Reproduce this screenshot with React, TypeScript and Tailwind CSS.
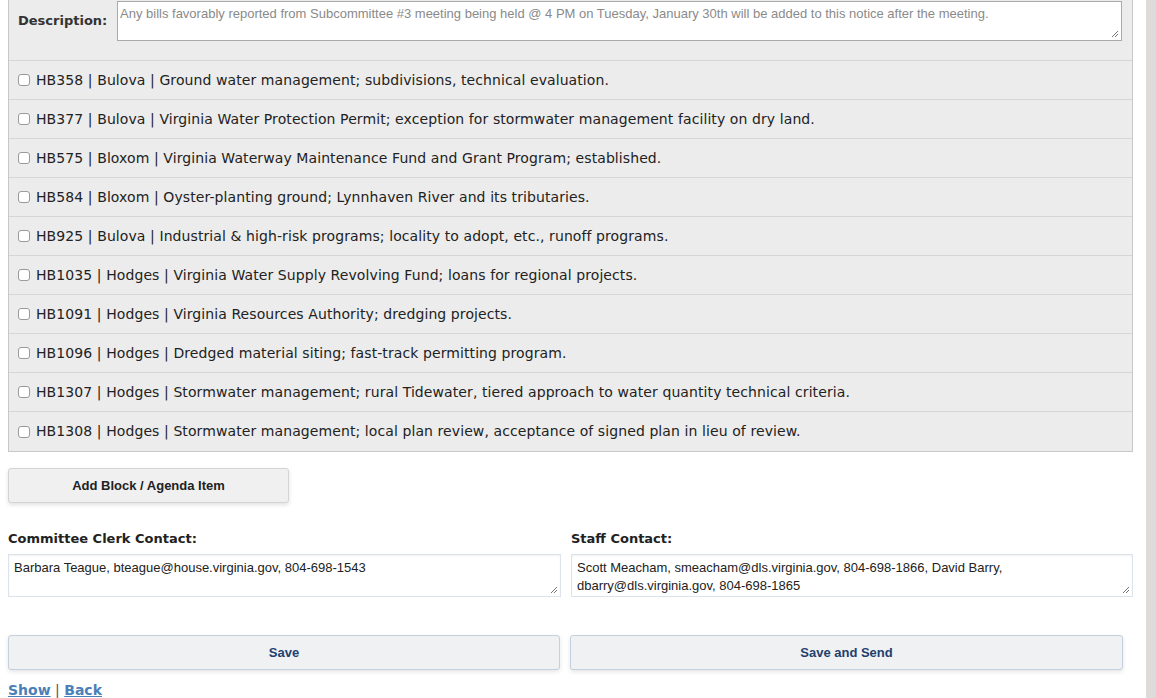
import React from "react";

const bills = [
  "HB358 | Bulova | Ground water management; subdivisions, technical evaluation.",
  "HB377 | Bulova | Virginia Water Protection Permit; exception for stormwater management facility on dry land.",
  "HB575 | Bloxom | Virginia Waterway Maintenance Fund and Grant Program; established.",
  "HB584 | Bloxom | Oyster-planting ground; Lynnhaven River and its tributaries.",
  "HB925 | Bulova | Industrial & high-risk programs; locality to adopt, etc., runoff programs.",
  "HB1035 | Hodges | Virginia Water Supply Revolving Fund; loans for regional projects.",
  "HB1091 | Hodges | Virginia Resources Authority; dredging projects.",
  "HB1096 | Hodges | Dredged material siting; fast-track permitting program.",
  "HB1307 | Hodges | Stormwater management; rural Tidewater, tiered approach to water quantity technical criteria.",
  "HB1308 | Hodges | Stormwater management; local plan review, acceptance of signed plan in lieu of review.",
];

const verdana = "font-['DejaVu_Sans',Verdana,sans-serif]";
const helv = "font-['Liberation_Sans',Arial,sans-serif]";

function Grip() {
  return (
    <svg className="absolute right-[2px] bottom-[2px]" width="8" height="8" viewBox="0 0 8 8">
      <path d="M7 1 L1 7 M7 4 L4 7" stroke="#777" strokeWidth="1" />
    </svg>
  );
}

export default function App() {
  return (
    <div className="flex h-[698px] w-[1156px] overflow-hidden bg-white text-[#222]">
      <div className="flex-1 pl-2 pr-[13px]">
        {/* bills panel */}
        <div className="-mt-[19px] border border-[#c8c8c8] bg-[#ececec]">
          <div className="flex items-center border-b border-[#d6d6d6] pt-[19px] pb-[19px] pl-[9px] pr-[10px]">
            <span className={`${verdana} w-[99px] text-[13px] font-bold text-[#333]`}>Description:</span>
            <div className={`${helv} relative h-[40px] flex-1 border border-[#aaa] bg-white px-[2px] pt-[4px] text-[13px] leading-[15px] text-[#8a8a8a]`}>
              Any bills favorably reported from Subcommittee #3 meeting being held @ 4 PM on Tuesday, January 30th will be added to this notice after the meeting.
              <Grip />
            </div>
          </div>
          {bills.map((b, i) => (
            <label
              key={b}
              className={`flex h-[39px] items-center gap-[6px] pl-[9px] ${i < bills.length - 1 ? "border-b border-[#d6d6d6]" : ""}`}
            >
              <input type="checkbox" className="h-[12px] w-[12px] shrink-0 appearance-none rounded-[3px] border border-[#9a9a9a] bg-white" />
              <span className={`${verdana} text-[14px] tracking-[0.09px] text-[#222]`}>{b}</span>
            </label>
          ))}
        </div>

        <button className={`${helv} mt-[16px] h-[35px] w-[281px] rounded-[3px] border border-[#d4d4d4] bg-[#f0f0f0] text-[13px] font-bold text-[#222] shadow-[0_2px_4px_rgba(0,0,0,0.12)]`}>
          Add Block / Agenda Item
        </button>

        {/* contacts */}
        <div className="mt-[28px] grid grid-cols-[553px_1fr] gap-[10px]">
          <div>
            <div className={`${verdana} text-[13px] font-bold leading-[16px] text-[#222]`}>Committee Clerk Contact:</div>
            <div className={`${helv} relative mt-[7px] h-[43px] border border-[#dde3ec] bg-white px-[5px] pt-[4px] text-[13px] leading-[18px] text-[#222] shadow-[inset_0_1px_2px_rgba(0,0,0,0.06)]`}>
              Barbara Teague, bteague@house.virginia.gov, 804-698-1543
              <Grip />
            </div>
          </div>
          <div>
            <div className={`${verdana} text-[13px] font-bold leading-[16px] text-[#222]`}>Staff Contact:</div>
            <div className={`${helv} relative mt-[7px] h-[43px] border border-[#dde3ec] bg-white px-[5px] pt-[4px] text-[13px] leading-[18px] text-[#222] shadow-[inset_0_1px_2px_rgba(0,0,0,0.06)]`}>
              Scott Meacham, smeacham@dls.virginia.gov, 804-698-1866, David Barry,
              <br />
              dbarry@dls.virginia.gov, 804-698-1865
              <Grip />
            </div>
          </div>
        </div>

        {/* actions */}
        <div className="mt-[38px] grid grid-cols-[552px_553px] gap-[10px]">
          <button className={`${helv} h-[35px] rounded-[3px] border border-[#c5d0de] bg-[#eff1f3] text-[13px] font-bold text-[#1f3f6e] shadow-[0_2px_4px_rgba(0,0,0,0.1)]`}>
            Save
          </button>
          <button className={`${helv} h-[35px] rounded-[3px] border border-[#c5d0de] bg-[#eff1f3] text-[13px] font-bold text-[#1f3f6e] shadow-[0_2px_4px_rgba(0,0,0,0.1)]`}>
            Save and Send
          </button>
        </div>

        <div className={`${verdana} mt-[12px] text-[14px] font-bold leading-[17px] text-[#555]`}>
          <a href="#" className="text-[#4a7fb8] underline">Show</a>
          <span className="font-normal"> | </span>
          <a href="#" className="text-[#4a7fb8] underline">Back</a>
        </div>
      </div>
      <div className="w-[10px] bg-[#dedcdb]" />
    </div>
  );
}
